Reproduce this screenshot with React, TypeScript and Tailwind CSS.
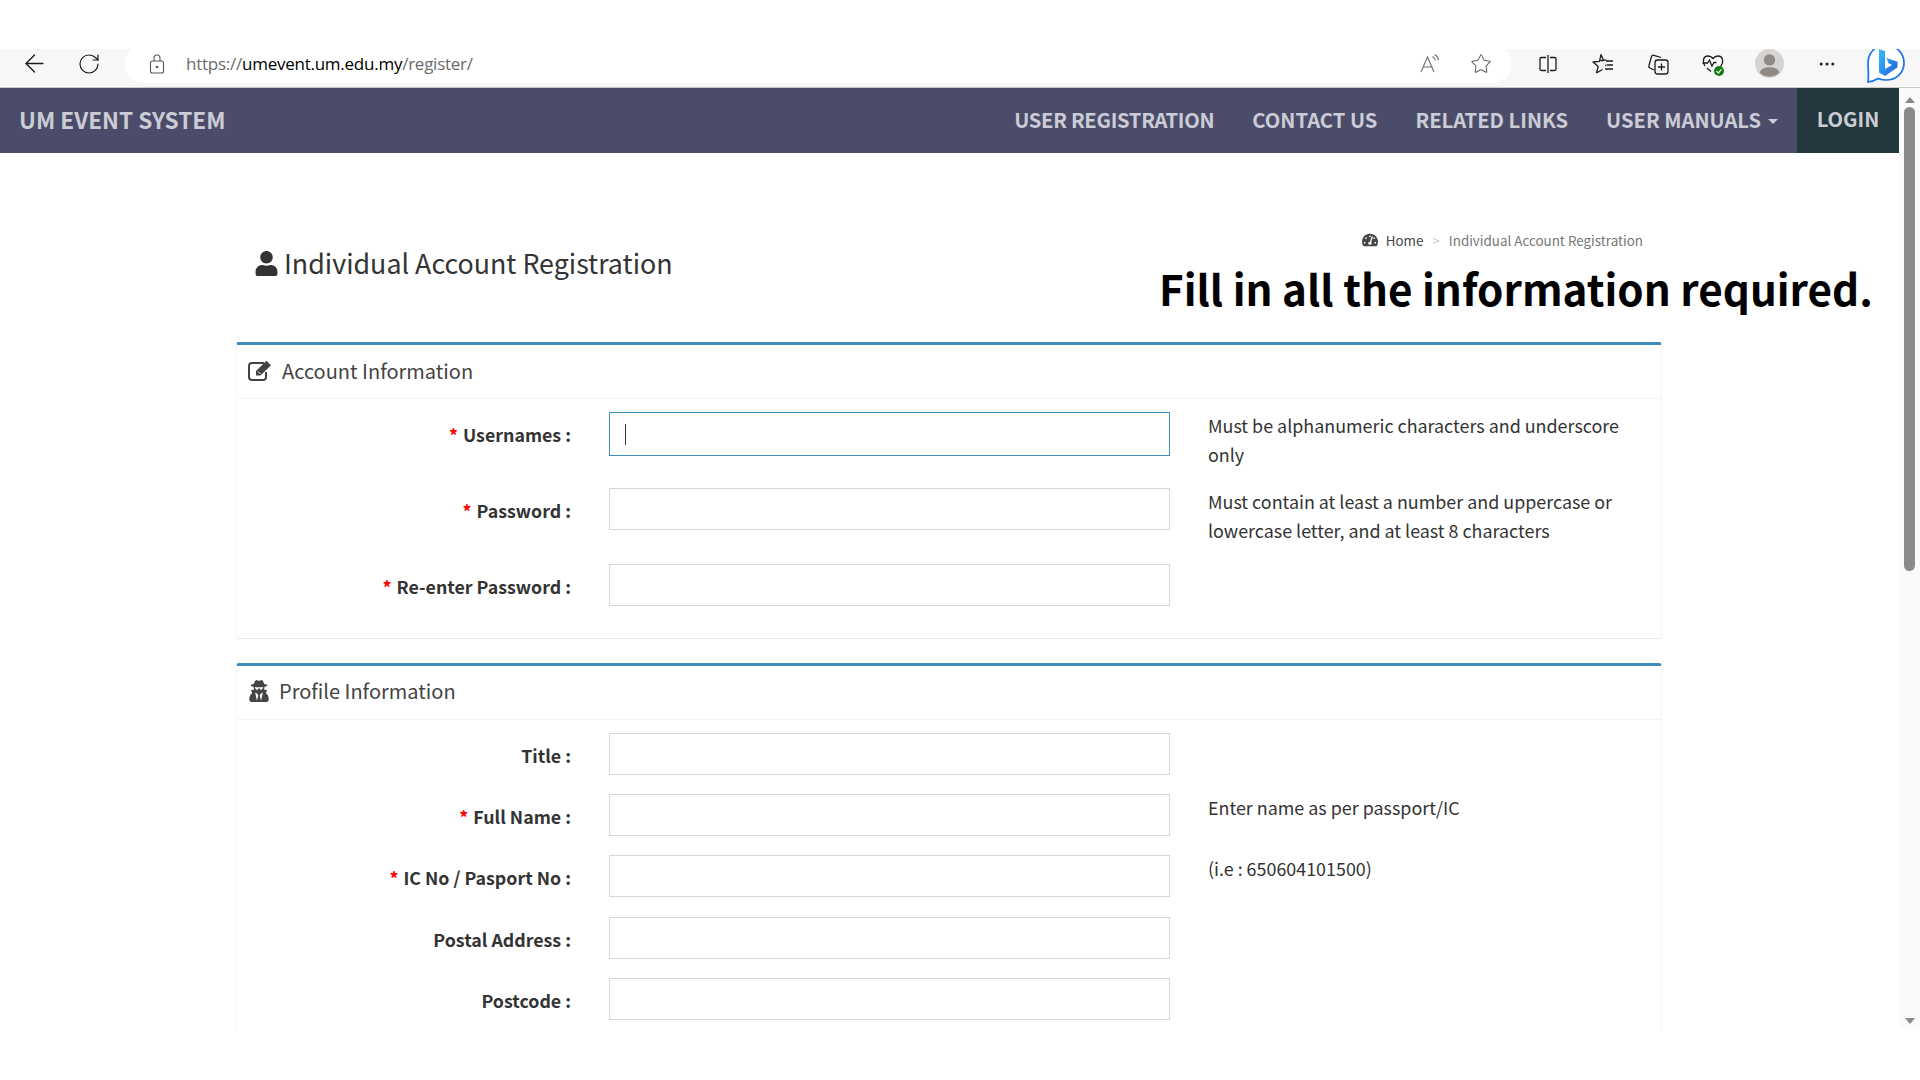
import { ArrowLeft, RotateCw, Star, MoreHorizontal } from "lucide-react";
import { FaUser, FaUserSecret, FaTachometerAlt } from "react-icons/fa";
import type { ReactNode } from "react";

const font = "font-['Noto_Sans_CJK_SC','Source_Sans_Pro',sans-serif]";

function ReadAloud() {
  return (
    <svg width="22" height="22" viewBox="0 0 22 22" fill="none" stroke="#6f6f6f" strokeWidth="1.100">
      <path d="M2 19 8.500 4 15 19M4.400 14h8.200" />
      <path d="M13.500 3.500c1.600.8 2.500 2.200 2.800 4M15.500 1.500c2.400 1.200 3.700 3.300 4 6" />
    </svg>
  );
}

function SplitIcon() {
  return (
    <svg width="20" height="20" viewBox="0 0 20 20" fill="none" stroke="#1c1c1c" strokeWidth="1.300">
      <path d="M8 3.500H3.500a1.500 1.500 0 0 0-1.500 1.500v10a1.500 1.500 0 0 0 1.500 1.500H8M12 3.500h4.500A1.500 1.500 0 0 1 18 5v10a1.500 1.500 0 0 1-1.500 1.500H12M10 1v18" />
    </svg>
  );
}

function FavoritesIcon() {
  return (
    <svg width="24" height="24" viewBox="0 0 24 24" fill="none" stroke="#1c1c1c" strokeWidth="1.300" strokeLinejoin="round">
      <path d="M10 2.500 12.400 8l-.1.500H9.500M12.400 8l3 .2M14 13.500l.9 0M5.500 21l1.700-6.500L2 10l6.500-.7L10 2.500M5.500 21l6-3.500" />
      <path d="M15 9h7M15.500 13h6.500M14 17h8" />
    </svg>
  );
}

function CollectionsIcon() {
  return (
    <svg width="24" height="24" viewBox="0 0 24 24" fill="none" stroke="#1c1c1c" strokeWidth="1.300">
      <path d="M8 18 4 16a2 2 0 0 1-1-2.600L5.500 4.500A2 2 0 0 1 8 3.300L15 5.500" />
      <rect x="9" y="8" width="13" height="14" rx="2.500" />
      <path d="M15.500 11.500v7M12 15h7" />
    </svg>
  );
}

function HeartIcon() {
  return (
    <div className="relative h-[24px] w-[24px]">
      <svg width="24" height="24" viewBox="0 0 24 24" fill="none" stroke="#1c1c1c" strokeWidth="1.300">
        <path d="M4 14C1 10 2 4 7 4c2 0 3.800 1 5 2.500C13.200 5 15 4 17 4c5 0 6 6 3 10l-5 5" />
        <path d="M1.500 11H6.500l2-3 2.500 6 2-3.500h2.500M6 16l4 3.500" />
      </svg>
      <div className="absolute right-[1px] bottom-0 flex h-[10px] w-[10px] items-center justify-center rounded-full bg-[#107c10]">
        <svg width="8" height="8" viewBox="0 0 8 8" fill="none" stroke="#fff" strokeWidth="1.200">
          <path d="M1.500 4.200 3.300 6 6.500 2.300" />
        </svg>
      </div>
    </div>
  );
}

function ProfileIcon() {
  return (
    <svg width="29" height="29" viewBox="0 0 28 28">
      <circle cx="14" cy="14" r="14" fill="#d6d3d0" />
      <circle cx="14" cy="10.500" r="5.500" fill="#8f8a85" />
      <path d="M4.500 23c1-4 4.500-5.500 9.500-5.500s8.500 1.500 9.500 5.500a14 14 0 0 1-19 0z" fill="#8f8a85" />
    </svg>
  );
}

function BingIcon() {
  return (
    <svg width="40" height="40" viewBox="0 0 40 40" fill="none">
      <defs>
        <linearGradient id="bing" x1="0" y1="0" x2="1" y2="1">
          <stop offset="0" stopColor="#37bdff" />
          <stop offset="1" stopColor="#1f5fd8" />
        </linearGradient>
      </defs>
      <path d="M20 1C9.500 1 2 9 2 19c0 5 1 12 0 19 4-.500 7-1.500 10-3.500 2.500 1 5 1.500 8 1.500 10.500 0 18-7.500 18-17S30.500 1 20 1z" fill="#fff" stroke="#1a73e8" strokeWidth="1.700" />
      <path d="M13 5l6 2v18l7-4-3.500-1.700-2-5.300 11 3.800v5.500L19 32l-6-3.500z" fill="url(#bing)" />
    </svg>
  );
}

function BrowserBar() {
  return (
    <div className="flex h-[39px] items-center overflow-hidden border-b border-[#c9c9c9] bg-[#f7f7f7] pb-[9px]">
      <div className="flex w-[125px] shrink-0 items-center pl-[20px]">
        <ArrowLeft size={29} strokeWidth={1.100} color="#1c1c1c" />
        <RotateCw size={24} strokeWidth={1.200} color="#1c1c1c" className="ml-[28px]" />
      </div>
      <div className="flex h-[38px] w-[1387px] shrink-0 items-center rounded-[19px] bg-white">
        <svg width="16" height="20" viewBox="0 0 16 20" fill="none" stroke="#555" strokeWidth="1.100" className="ml-[24px]">
          <rect x="1.500" y="7" width="13" height="12" rx="2" />
          <path d="M5 7V4a3 3 0 0 1 6 0v3" />
          <circle cx="8" cy="13" r=".8" fill="#555" />
        </svg>
        <div className="ml-[21px] font-['Open_Sans',sans-serif] text-[17px] tracking-[-0.25px] text-[#6b6b6b]">
          https://<span className="text-black">umevent.um.edu.my</span>/register/
        </div>
        <div className="ml-auto flex items-center gap-[29px] pr-[20px]">
          <ReadAloud />
          <Star size={22} strokeWidth={1.100} color="#5f5f5f" />
        </div>
      </div>
      <div className="ml-[26px] flex shrink-0 items-center">
        <SplitIcon />
        <div className="ml-[33px]"><FavoritesIcon /></div>
        <div className="ml-[31px]"><CollectionsIcon /></div>
        <div className="ml-[31px]"><HeartIcon /></div>
        <div className="ml-[30px]"><ProfileIcon /></div>
        <MoreHorizontal size={20} strokeWidth={1.600} color="#1c1c1c" className="ml-[33px]" />
        <div className="ml-[29px] h-[40px] w-[40px] shrink-0 overflow-hidden"><BingIcon /></div>
      </div>
    </div>
  );
}

function EditIcon() {
  return (
    <svg width="25" height="22" viewBox="0 0 25 22" fill="none" className="mr-[9px]">
      <path d="M16 3H4a3 3 0 0 0-3 3v11a3 3 0 0 0 3 3h11a3 3 0 0 0 3-3v-5" stroke="#444" strokeWidth="2" />
      <path d="M8 11 18.500 .8l4.500 4.500L12.500 15.500H8z" fill="#444" />
      <path d="M10 11.500l2.500 2.500" stroke="#fff" strokeWidth="1" />
    </svg>
  );
}

function NavItem({ children }: { children: ReactNode }) {
  return <div className="flex h-full items-center px-[19px]">{children}</div>;
}

function Navbar() {
  return (
    <div className={`flex h-[65px] shrink-0 items-center bg-[#4b4c6a] text-[#ccccd6] ${font}`}>
      <div className="pb-[2px] pl-[19px] text-[22.600px] font-semibold">UM EVENT SYSTEM</div>
      <div className="ml-auto flex h-full items-center pb-[1px] text-[20.200px] font-semibold">
        <NavItem><span className="tracking-[-0.3px]">USER REGISTRATION</span></NavItem>
        <NavItem>CONTACT US</NavItem>
        <NavItem>RELATED LINKS</NavItem>
        <NavItem>
          USER MANUALS
          <span className="ml-[7px] mt-[2px] h-0 w-0 border-x-[5px] border-t-[5px] border-x-transparent border-t-[#ccccd6]" />
        </NavItem>
        <div className="flex h-[65px] w-[102px] items-center justify-center bg-[#22383d] pb-[1px]">LOGIN</div>
      </div>
    </div>
  );
}

function Field({ label, req, note, focus, rowClass }: { label: string; req?: boolean; note?: ReactNode; focus?: boolean; rowClass: string }) {
  return (
    <div className={`grid grid-cols-[334px_561px_432px] gap-x-[38px] ${rowClass}`}>
      <div className="flex h-[42px] items-center justify-end pt-[3px] text-[17.800px] font-bold text-[#333]">
        {req && <span className="mr-[5px] text-[#f00]">*</span>}
        {label} :
      </div>
      {focus ? (
        <div className="flex h-[44px] items-center border border-[#3c8dbc] pl-[15px]">
          <div className="h-[21px] w-px bg-[#333]" />
        </div>
      ) : (
        <div className="h-[42px] border border-[#d2d6de]" />
      )}
      <div className="-mt-px text-[17.900px] leading-[29px] text-[#333]">{note}</div>
    </div>
  );
}

function Panel({ icon, title, children, className, headerClass }: { icon: ReactNode; title: string; children: ReactNode; className: string; headerClass: string }) {
  return (
    <div className={`w-[1426px] rounded-[3px] border-x border-t-[3px] border-x-[#f6f6f6] border-t-[#3c8dbc] shadow-[0_1px_1px_rgba(0,0,0,0.1)] ${className}`}>
      <div className={`flex h-[54px] items-center border-b border-[#f4f4f4] pl-[11px] text-[20px] text-[#444] ${headerClass}`}>
        {icon}
        {title}
      </div>
      {children}
    </div>
  );
}

function Main() {
  return (
    <div className={`relative h-full min-w-0 flex-1 overflow-hidden bg-white ${font}`}>
      <Navbar />
      <div className="px-[236px]">
        <div className="relative h-[189px]">
          <div className="absolute left-[18px] top-[91px] flex items-center text-[26.800px] leading-[38px] text-[#333]">
            <FaUser size={25} className="mr-[5px] text-[#333]" />
            Individual Account Registration
          </div>
          <div className="absolute right-[20px] top-[77px] flex items-center text-[13.400px] leading-[20px] text-[#777]">
            <FaTachometerAlt size={16} className="mr-[8px] text-[#444]" />
            <span className="text-[#444]">Home</span>
            <span className="mx-[9px] text-[#ccc]">&gt;</span>
            Individual Account Registration
          </div>
        </div>
        <Panel icon={<EditIcon />} title="Account Information" className="h-[296px]" headerClass="pb-px">
          <div className="pt-[13px]">
            <Field label="Usernames" req focus rowClass="h-[76px]" note="Must be alphanumeric characters and underscore only" />
            <Field label="Password" req rowClass="h-[76px]" note="Must contain at least a number and uppercase or lowercase letter, and at least 8 characters" />
            <Field label="Re-enter Password" req rowClass="h-[76px]" />
          </div>
        </Panel>
        <Panel
          icon={<FaUserSecret size={22} className="mr-[9px] text-[#444]" />}
          title="Profile Information"
          className="mt-[25px] h-[400px]"
          headerClass="pb-[3px]"
        >
          <div className="pt-[13px]">
            <Field label="Title" rowClass="h-[61px]" />
            <Field label="Full Name" req rowClass="h-[61px]" note="Enter name as per passport/IC" />
            <Field label="IC No / Pasport No" req rowClass="h-[62px]" note="(i.e : 650604101500)" />
            <Field label="Postal Address" rowClass="h-[61px]" />
            <Field label="Postcode" rowClass="h-[61px]" />
          </div>
        </Panel>
      </div>
    </div>
  );
}

function Scrollbar() {
  return (
    <div className="flex h-full w-[21px] shrink-0 flex-col items-center bg-[#fafafa] pt-[9px]">
      <div className="h-0 w-0 border-x-[5px] border-b-[6px] border-x-transparent border-b-[#8a8a8a]" />
      <div className="mt-[4px] h-[464px] w-[11px] rounded-full bg-[#8a8a8a]" />
      <div className="mt-auto mb-[5px] h-0 w-0 border-x-[5px] border-t-[6px] border-x-transparent border-t-[#8a8a8a]" />
    </div>
  );
}

export default function App() {
  return (
    <div className="relative h-[1080px] w-[1920px] overflow-hidden bg-white">
      <div className="h-[49px]" />
      <BrowserBar />
      <div className="flex h-[941px]">
        <Main />
        <Scrollbar />
      </div>
      <div className={`absolute left-[1159px] top-[257px] whitespace-nowrap text-[42.200px] font-bold leading-[62px] text-black ${font}`}>
        Fill in all the information required.
      </div>
    </div>
  );
}
